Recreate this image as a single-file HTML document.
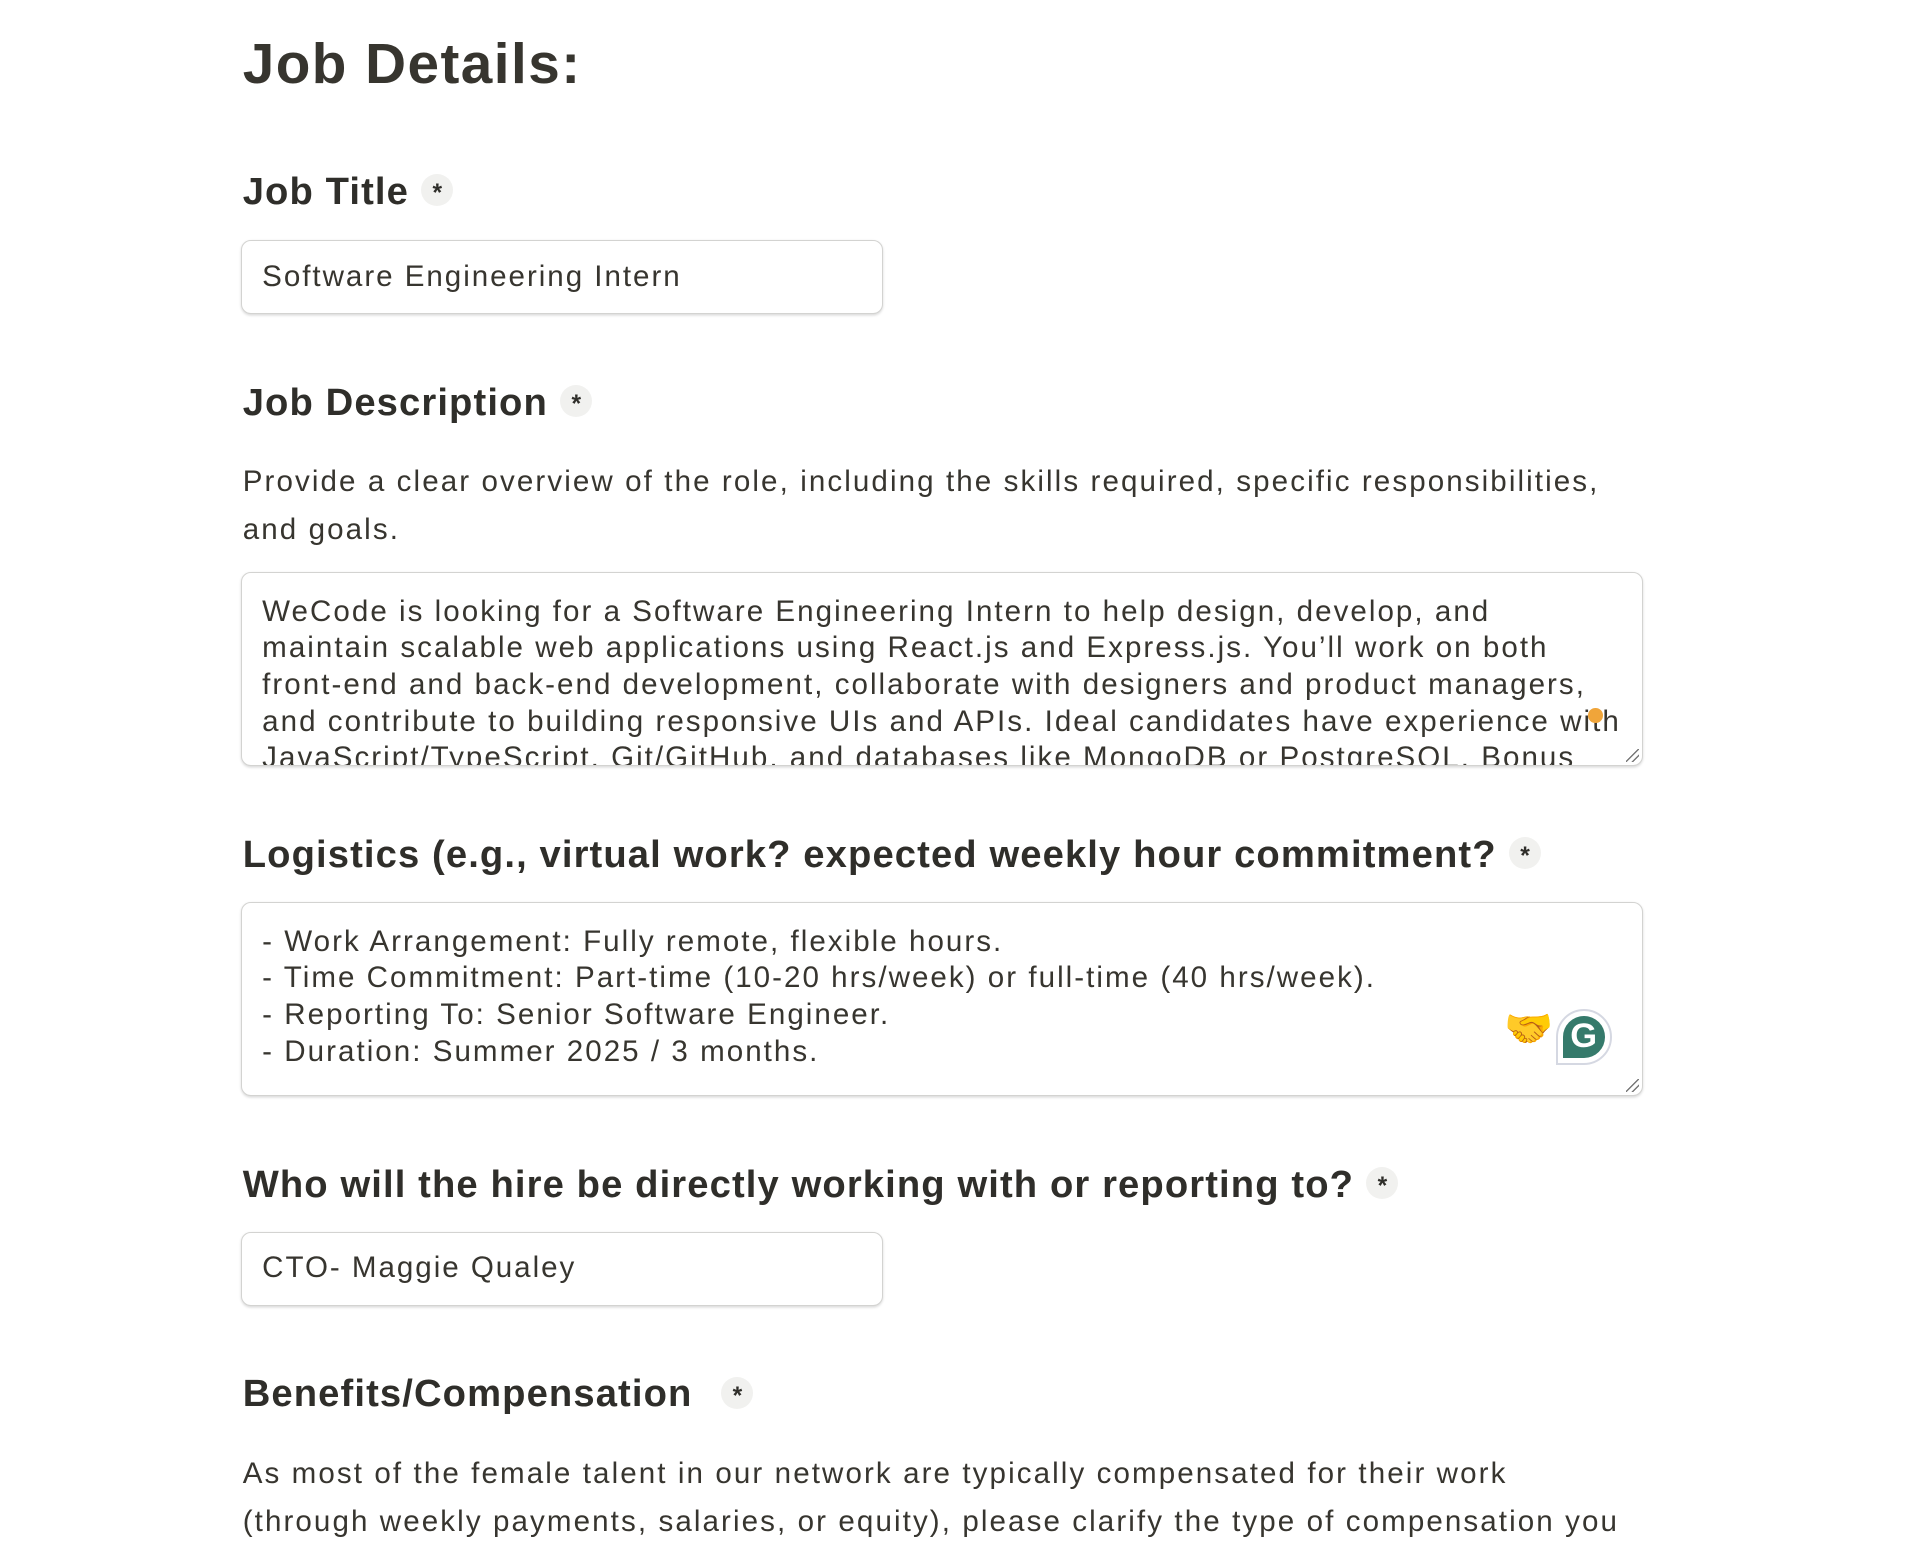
<!DOCTYPE html>
<html><head><meta charset="utf-8"><style>
html,body{margin:0;padding:0;background:#fff;overflow:hidden}
body{width:1932px;height:1556px}
#w{zoom:1.232;position:relative;width:1568px;height:1263px;font-family:"Liberation Sans",sans-serif;color:#37352f}
.a{position:absolute;left:197px;white-space:nowrap}
h1{margin:0;font-size:46px;font-weight:700;letter-spacing:1.2px}
.l{font-size:31px;font-weight:700;color:#2f2e2a;letter-spacing:0.9px}
.s{display:inline-block;width:26px;height:26px;border-radius:50%;background:#f1f1ef;font-size:20px;font-weight:700;text-align:center;line-height:32px;vertical-align:middle;margin-left:10px;position:relative;top:-3px;letter-spacing:0}
.box{position:absolute;left:196px;border:1px solid #d3d3d1;border-radius:8px;box-shadow:0 1px 2px rgba(0,0,0,.15);background:#fff;overflow:hidden;box-sizing:border-box}
.in{font-size:24px;padding:15px 16px;height:60px;width:521px;letter-spacing:1.6px}
.ta{font-size:24px;line-height:29.8px;padding:16px 16px;width:1138px;white-space:nowrap;letter-spacing:1.65px}
p{margin:0;font-size:24px;line-height:39px;letter-spacing:1.7px}
.rz{position:absolute;right:3px;bottom:3px;width:10px;height:10px;background:linear-gradient(135deg,transparent 45%,#777 45%,#777 52%,transparent 52%,transparent 70%,#777 70%,#777 77%,transparent 77%)}
</style></head><body><div id="w">
<h1 class="a" style="top:26px">Job Details:</h1>
<div class="a l" style="top:138px">Job Title<span class="s">*</span></div>
<div class="box in" style="top:195px">Software Engineering Intern</div>
<div class="a l" style="top:309px">Job Description<span class="s">*</span></div>
<p class="a" style="top:372px">Provide a clear overview of the role, including the skills required, specific responsibilities,<br>and goals.</p>
<div class="box ta" style="top:464px;height:158px;padding-top:17px">WeCode is looking for a Software Engineering Intern to help design, develop, and<br>maintain scalable web applications using React.js and Express.js. You’ll work on both<br>front-end and back-end development, collaborate with designers and product managers,<br>and contribute to building responsive UIs and APIs. Ideal candidates have experience with<br>JavaScript/TypeScript, Git/GitHub, and databases like MongoDB or PostgreSQL. Bonus<div class="rz"></div><div style="position:absolute;left:1092px;top:110px;width:12px;height:12px;border-radius:50%;background:#f0a53a"></div></div>
<div class="a l" style="top:676px">Logistics (e.g., virtual work? expected weekly hour commitment?<span class="s">*</span></div>
<div class="box ta" style="top:732px;height:158px;padding-top:17px">- Work Arrangement: Fully remote, flexible hours.<br>- Time Commitment: Part-time (10-20 hrs/week) or full-time (40 hrs/week).<br>- Reporting To: Senior Software Engineer.<br>- Duration: Summer 2025 / 3 months.<div class="rz"></div>
<div style="position:absolute;left:1024px;top:88px;font-size:32px;letter-spacing:0">🤝</div>
<div style="position:absolute;left:1066px;top:86px;width:46px;height:46px;border:2px solid #d5d8e2;border-radius:50% 50% 50% 0;box-sizing:border-box;background:#fff;letter-spacing:0"><div style="position:absolute;left:4px;top:4px;width:34px;height:34px;background:#357a6b;border-radius:50% 50% 50% 0;color:#fff;font-weight:700;font-size:28px;line-height:34px;text-align:center">G</div></div></div>
<div class="a l" style="top:944px">Who will the hire be directly working with or reporting to?<span class="s">*</span></div>
<div class="box in" style="top:1000px">CTO- Maggie Qualey</div>
<div class="a l" style="top:1114px">Benefits/Compensation <span class="s" style="margin-left:14px">*</span></div>
<p class="a" style="top:1177px">As most of the female talent in our network are typically compensated for their work<br>(through weekly payments, salaries, or equity), please clarify the type of compensation you</p>
</div></body></html>
